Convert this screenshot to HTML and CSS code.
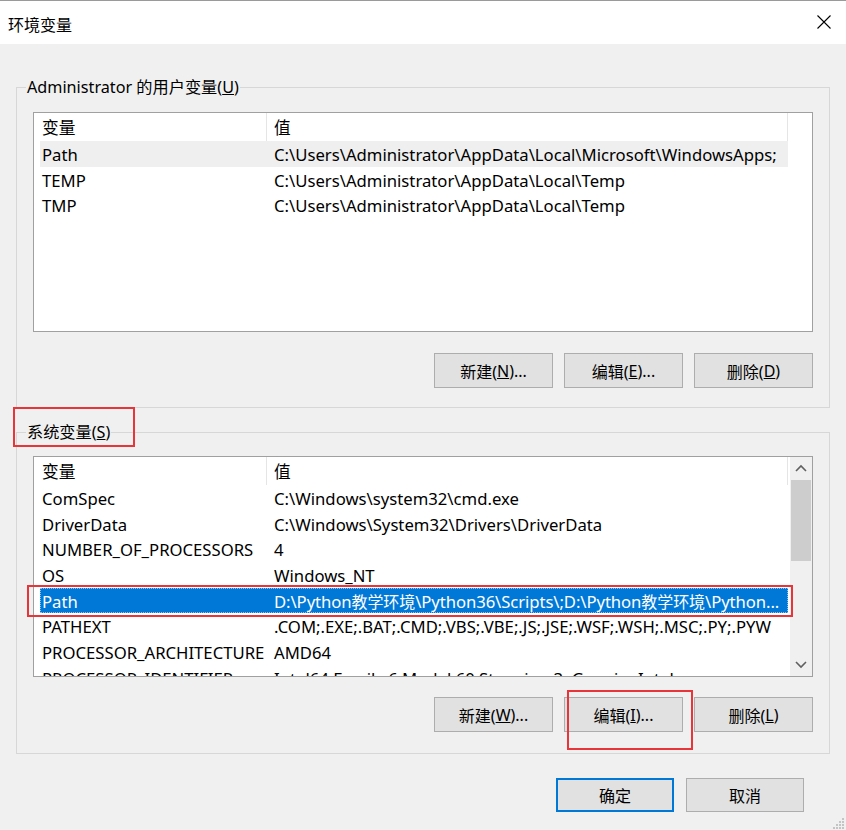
FILE: index.html
```html
<!DOCTYPE html>
<html lang="zh-CN">
<head>
<meta charset="utf-8">
<title>环境变量</title>
<link rel="stylesheet" href="styles.css">
</head>
<body>
<div class="dialog">
  <div class="titlebar">
    <span class="title">环境变量</span>
    <svg class="close" width="14" height="14" viewBox="0 0 14 14"><path d="M0.5 0.5 L13.5 13.5 M13.5 0.5 L0.5 13.5" stroke="#000" stroke-width="1.1" fill="none"/></svg>
  </div>
  <div class="main">
    <fieldset class="group group-user">
      <legend>Administrator 的用户变量(<u>U</u>)</legend>
      <div class="group-inner">
        <div class="list list-user">
          <div class="list-body">
            <div class="hdr"><div class="c1">变量</div><div class="c2">值</div></div>
            <div class="row inactive"><div class="c1">Path</div><div class="c2">C:\Users\Administrator\AppData\Local\Microsoft\WindowsApps;</div></div>
            <div class="row"><div class="c1">TEMP</div><div class="c2">C:\Users\Administrator\AppData\Local\Temp</div></div>
            <div class="row"><div class="c1">TMP</div><div class="c2">C:\Users\Administrator\AppData\Local\Temp</div></div>
          </div>
        </div>
        <div class="btns">
          <div class="btn">新建(<u>N</u>)...</div>
          <div class="btn">编辑(<u>E</u>)...</div>
          <div class="btn">删除(<u>D</u>)</div>
        </div>
      </div>
    </fieldset>
    <fieldset class="group group-sys">
      <legend>系统变量(<u>S</u>)</legend>
      <div class="group-inner">
        <div class="list list-sys">
          <div class="list-body">
            <div class="hdr"><div class="c1">变量</div><div class="c2">值</div></div>
            <div class="row"><div class="c1">ComSpec</div><div class="c2">C:\Windows\system32\cmd.exe</div></div>
            <div class="row"><div class="c1">DriverData</div><div class="c2">C:\Windows\System32\Drivers\DriverData</div></div>
            <div class="row"><div class="c1">NUMBER_OF_PROCESSORS</div><div class="c2">4</div></div>
            <div class="row"><div class="c1">OS</div><div class="c2">Windows_NT</div></div>
            <div class="row selected"><div class="c1">Path</div><div class="c2 tight">D:\Python<span class="cjk">教学环境</span>\Python36\Scripts\;D:\Python<span class="cjk">教学环境</span>\Python...</div></div>
            <div class="row"><div class="c1">PATHEXT</div><div class="c2">.COM;.EXE;.BAT;.CMD;.VBS;.VBE;.JS;.JSE;.WSF;.WSH;.MSC;.PY;.PYW</div></div>
            <div class="row"><div class="c1">PROCESSOR_ARCHITECTURE</div><div class="c2">AMD64</div></div>
            <div class="row"><div class="c1">PROCESSOR_IDENTIFIER</div><div class="c2">Intel64 Family 6 Model 60 Stepping 3, GenuineIntel</div></div>
          </div>
          <div class="scrollbar">
            <div class="sb-btn"><svg width="12" height="8" viewBox="0 0 12 8"><path d="M1 7 L6 2 L11 7" stroke="#606060" stroke-width="1.6" fill="none"/></svg></div>
            <div class="sb-track"><div class="sb-thumb"></div></div>
            <div class="sb-btn"><svg width="12" height="8" viewBox="0 0 12 8"><path d="M1 1 L6 6 L11 1" stroke="#606060" stroke-width="1.6" fill="none"/></svg></div>
          </div>
        </div>
        <div class="btns btns-sys">
          <div class="btn">新建(<u>W</u>)...</div>
          <div class="btn">编辑(<u>I</u>)...</div>
          <div class="btn">删除(<u>L</u>)</div>
        </div>
      </div>
    </fieldset>
  </div>
  <div class="footer">
    <div class="btn btn-default">确定</div>
    <div class="btn btn-footer">取消</div>
  </div>
  <svg class="grip" width="12" height="12" viewBox="0 0 12 12">
    <rect x="9" y="1" width="2" height="2" fill="#c4c4c4"/>
    <rect x="6" y="4" width="2" height="2" fill="#c4c4c4"/>
    <rect x="9" y="4" width="2" height="2" fill="#c4c4c4"/>
    <rect x="3" y="7" width="2" height="2" fill="#c4c4c4"/>
    <rect x="6" y="7" width="2" height="2" fill="#c4c4c4"/>
    <rect x="9" y="7" width="2" height="2" fill="#c4c4c4"/>
    <rect x="0" y="10" width="2" height="2" fill="#c4c4c4"/>
    <rect x="3" y="10" width="2" height="2" fill="#c4c4c4"/>
    <rect x="6" y="10" width="2" height="2" fill="#c4c4c4"/>
    <rect x="9" y="10" width="2" height="2" fill="#c4c4c4"/>
  </svg>
  <div class="mark mark-sys"></div>
  <div class="mark mark-path"></div>
  <div class="mark mark-edit"></div>
</div>
</body>
</html>
```

FILE: styles.css
```css
* { box-sizing: border-box; }
body { margin: 0; background: #f0f0f0; }
.dialog {
  position: relative;
  width: 846px;
  height: 830px;
  overflow: hidden;
  background: #f0f0f0;
  font-family: "Noto Sans", "Noto Sans CJK SC", sans-serif;
  font-size: 16px;
  color: #000;
}
.titlebar {
  height: 44px;
  background: #fff;
  border-top: 1px solid #9a9a9a;
  display: flex;
  align-items: center;
  padding: 4px 0 0 8px;
}
.title { font-size: 16px; line-height: 20px; }
.close { margin-left: auto; margin-right: 15px; margin-top: -6px; }
.main { padding: 0 16px; }
.group {
  margin: 0;
  padding: 0;
  min-width: 0;
  border: 1px solid #d7d7d7;
}
.group legend {
  display: block;
  height: 20px;
  line-height: 20px;
  margin-left: 9px;
  padding: 0 1px;
  white-space: nowrap;
  font-size: 16.2px;
}
.group-user { margin-top: 33px; }
.group-sys { margin-top: 14px; }
.group-user .group-inner { padding: 15px 16px 19px; }
.group-sys .group-inner { padding: 14px 16px 21px; }
.list {
  display: flex;
  background: #fff;
  border: 1px solid #a0a0a0;
  overflow: hidden;
  font-size: 16.7px;
}
.list-user { height: 220px; }
.list-sys { height: 221px; }
.list-body { flex: 1; padding-left: 6px; overflow: hidden; min-width: 0; }
.hdr { display: flex; height: 28px; line-height: 29px; width: 748px; }
.hdr .c1 { border-right: 1px solid #e5e5e5; }
.hdr .c2 { border-right: 1px solid #e5e5e5; }
.row { display: flex; height: 25.7px; line-height: 27px; width: 748px; }
.c1 { width: 227px; padding-left: 2px; white-space: nowrap; overflow: hidden; flex: none; }
.c2 { width: 521px; padding-left: 7px; white-space: nowrap; overflow: hidden; flex: none; }
.c2.tight { letter-spacing: -0.08px; }
.cjk { font-size: 16px; }
.row.inactive { background: #efefef; }
.row.selected { background: #0078d7; color: #fff; outline: 1px dotted rgba(255,255,255,0.55); outline-offset: -1px; }
.scrollbar {
  width: 22px;
  flex: none;
  background: #f0f0f0;
  display: flex;
  flex-direction: column;
}
.sb-btn { height: 22px; display: flex; align-items: center; justify-content: center; flex: none; }
.sb-track { flex: 1; padding: 1px 1px 0; }
.sb-thumb { height: 81px; background: #cdcdcd; }
.btns { display: flex; justify-content: flex-end; gap: 11px; margin-top: 21px; }
.btns-sys { margin-top: 20px; }
.btn {
  width: 119px;
  height: 35px;
  background: #e1e1e1;
  border: 1px solid #adadad;
  display: flex;
  align-items: center;
  justify-content: center;
  white-space: nowrap;
}
.footer { display: flex; justify-content: flex-end; gap: 12px; margin-top: 24px; padding-right: 42px; }
.footer .btn { width: 118px; height: 34px; }
.btn-default { border: 2px solid #0078d7; }
.grip { position: absolute; right: 1px; bottom: 1px; }
.mark { position: absolute; border: 2px solid #e8353a; }
.mark-sys { left: 13px; top: 407px; width: 122px; height: 40px; }
.mark-path { left: 27px; top: 585px; width: 766px; height: 32px; }
.mark-edit { left: 567px; top: 690px; width: 126px; height: 60px; }
```
